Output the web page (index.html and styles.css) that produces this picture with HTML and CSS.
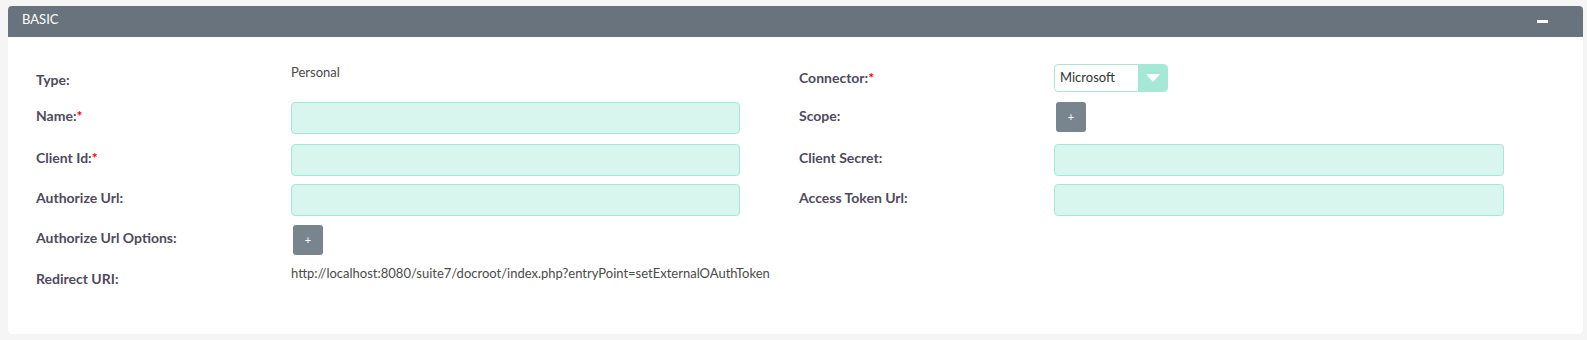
FILE: index.html
```html
<!DOCTYPE html>
<html>
<head>
<meta charset="utf-8">
<link rel="stylesheet" href="styles.css">
</head>
<body>
<div class="panel">
  <div class="panel-heading">
    <span class="panel-title">BASIC</span>
    <span class="collapse-icon"></span>
  </div>
  <div class="panel-body">
    <div class="lbl lbl-type">Type:</div>
    <div class="val val-text val-personal">Personal</div>
    <div class="lbl lbl-connector">Connector:<span class="req">*</span></div>
    <div class="val">
      <div class="select">
        <span class="select-text">Microsoft</span>
        <span class="select-arrow"><span class="tri"></span></span>
      </div>
    </div>

    <div class="lbl">Name:<span class="req">*</span></div>
    <div class="val"><div class="input"></div></div>
    <div class="lbl">Scope:</div>
    <div class="val"><button class="btn-add">+</button></div>

    <div class="lbl">Client Id:<span class="req">*</span></div>
    <div class="val"><div class="input"></div></div>
    <div class="lbl">Client Secret:</div>
    <div class="val"><div class="input input-wide"></div></div>

    <div class="lbl">Authorize Url:</div>
    <div class="val"><div class="input"></div></div>
    <div class="lbl">Access Token Url:</div>
    <div class="val"><div class="input input-wide"></div></div>

    <div class="lbl lbl-options">Authorize Url Options:</div>
    <div class="val"><button class="btn-add">+</button></div>
    <div class="lbl"></div>
    <div class="val"></div>

    <div class="lbl lbl-redirect">Redirect URI:</div>
    <div class="val val-text val-url">http://localhost:8080/suite7/docroot/index.php?entryPoint=setExternalOAuthToken</div>
    <div class="lbl"></div>
    <div class="val"></div>
  </div>
</div>
</body>
</html>
```

FILE: styles.css
```css
html, body {
  margin: 0;
  padding: 0;
  background: #f5f5f5;
  font-family: Lato, "Open Sans", sans-serif;
}

.panel {
  margin: 6px 4px 0 8px;
  background: #ffffff;
  border-radius: 4px;
  box-shadow: 0 1px 1px rgba(0, 0, 0, 0.04);
}

.panel-heading {
  display: flex;
  align-items: flex-start;
  height: 31px;
  box-sizing: border-box;
  padding: 4px 35px 0 14px;
  background: #68737e;
  border-radius: 4px 4px 0 0;
  color: #ffffff;
}

.panel-title {
  font-size: 13px;
  line-height: 18px;
}

.collapse-icon {
  margin-left: auto;
  margin-top: 10px;
  width: 11px;
  height: 3px;
  background: #ffffff;
}

.panel-body {
  display: grid;
  grid-template-columns: 255px 508px 255px 1fr;
  grid-template-rows: 40px 42px 40px 41px 39px 18px;
  padding: 25px 21px 52px 28px;
}

.lbl {
  font-size: 14px;
  line-height: 18px;
  font-weight: 700;
  color: #4f4a5e;
  padding-top: 5px;
  white-space: nowrap;
}

.lbl-type { padding-top: 9px; }
.lbl-connector { padding-top: 7px; }
.lbl-options { padding-top: 4px; }
.lbl-redirect { padding-top: 6px; }

.req {
  color: #ff0000;
  font-weight: 700;
}

.val-text {
  font-size: 13px;
  line-height: 18px;
  color: #4a4a4a;
  white-space: nowrap;
}

.val-personal { padding-top: 1px; }

.input {
  width: 449px;
  height: 32px;
  box-sizing: border-box;
  background: #d8f5ee;
  border: 1px solid #a5e8d6;
  border-radius: 4px;
}

.input-wide { width: 450px; }

.select {
  display: flex;
  width: 114px;
  height: 28px;
  margin-top: 2px;
  box-sizing: border-box;
  border: 1px solid #a5e8d6;
  border-radius: 4px;
  background: #ffffff;
  overflow: hidden;
}

.select-text {
  flex: 1;
  padding-left: 5px;
  font-size: 13px;
  line-height: 25px;
  color: #333333;
}

.select-arrow {
  width: 29px;
  background: #a5e8d6;
  display: flex;
  align-items: center;
  justify-content: center;
}

.tri {
  width: 0;
  height: 0;
  border-left: 7px solid transparent;
  border-right: 7px solid transparent;
  border-top: 8px solid #ffffff;
}

.btn-add {
  display: block;
  width: 30px;
  height: 30px;
  margin-left: 2px;
  padding: 0;
  border: none;
  border-radius: 3px;
  background: #78858f;
  color: #ffffff;
  font-family: Lato, "Open Sans", sans-serif;
  font-size: 11px;
  line-height: 30px;
  text-align: center;
}
```
